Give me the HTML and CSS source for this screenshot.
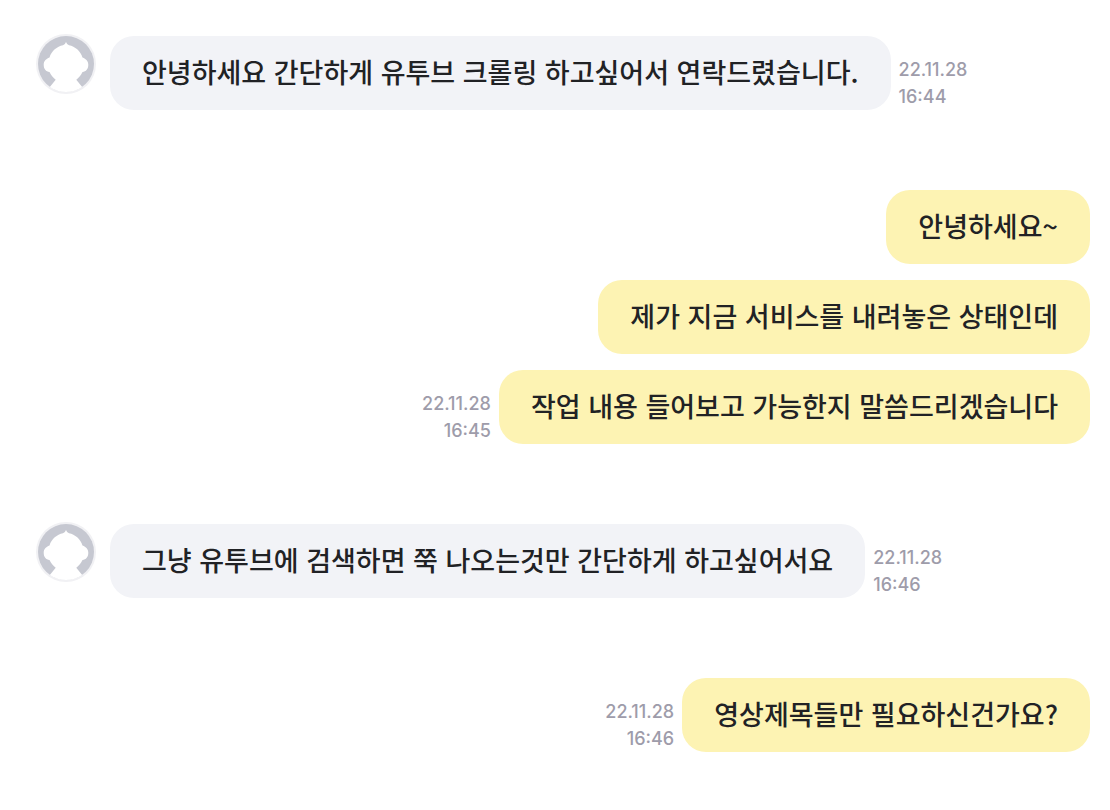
FILE: index.html
```html
<!DOCTYPE html>
<html lang="ko">
<head>
<meta charset="utf-8">
<title>채팅</title>
<link rel="stylesheet" href="styles.css">
</head>
<body>
<svg class="defs" aria-hidden="true">
  <symbol id="avatar" viewBox="0 0 60 60">
    <circle cx="30" cy="30" r="30" fill="#f1f1f4"/>
    <circle cx="30" cy="30" r="28" fill="#c6c8d1"/>
    <path d="M30 8Q30.800 10.500 33 11.300C39 12.500 44.500 17 46.500 23.500C50 25 52.300 27 52.300 30.700C52.300 35 50 37.500 46.500 38C45 41.500 43 43.500 40.300 45.700L46.200 53Q39 58 30 58Q21 58 13.800 53L19.700 45.700C17 43.500 15 41.500 13.500 38C10 37.500 7.700 35 7.700 30.700C7.700 27 10 25 13.500 23.500C15.500 17 21 12.500 27 11.300Q29.200 10.500 30 8Z" fill="#fff"/>
  </symbol>
</svg>
<main class="chat">
  <section class="group received">
    <svg class="avatar" role="img" aria-label="프로필"><use href="#avatar"/></svg>
    <div class="row"><p class="bubble">안녕하세요 간단하게 유투브 크롤링 하고싶어서 연락드렸습니다.</p><time class="time">22.11.28<br>16:44</time></div>
  </section>
  <section class="group sent">
    <div class="row"><p class="bubble">안녕하세요~</p></div>
    <div class="row"><p class="bubble">제가 지금 서비스를 내려놓은 상태인데</p></div>
    <div class="row"><time class="time">22.11.28<br>16:45</time><p class="bubble">작업 내용 들어보고 가능한지 말씀드리겠습니다</p></div>
  </section>
  <section class="group received">
    <svg class="avatar" role="img" aria-label="프로필"><use href="#avatar"/></svg>
    <div class="row"><p class="bubble">그냥 유투브에 검색하면 쭉 나오는것만 간단하게 하고싶어서요</p><time class="time">22.11.28<br>16:46</time></div>
  </section>
  <section class="group sent">
    <div class="row"><time class="time">22.11.28<br>16:46</time><p class="bubble">영상제목들만 필요하신건가요?</p></div>
  </section>
</main>
</body>
</html>
```
FILE: styles.css
```css
body {
  margin: 0;
  background: #fff;
  color: #212225;
  font-family: "Noto Sans CJK KR", sans-serif;
}
.defs {
  display: none;
}
.chat {
  display: flex;
  flex-direction: column;
  gap: 80px;
  padding: 36px 20px 36px 36px;
}
.group {
  display: flex;
}
.received {
  gap: 14px;
}
.sent {
  flex-direction: column;
  gap: 16px;
}
.sent .row {
  justify-content: flex-end;
}
.avatar {
  flex: none;
  width: 60px;
  height: 60px;
  margin-top: -2px;
}
.row {
  display: flex;
  align-items: flex-end;
  gap: 8px;
}
.bubble {
  margin: 0;
  padding: 15px 32px 17px;
  border-radius: 24px;
  background: #f2f3f7;
  font-size: 27px;
  font-weight: 500;
  line-height: 42px;
}
.sent .bubble {
  background: #fdf3b3;
}
.time {
  color: #9e9caa;
  font-family: Inter, sans-serif;
  font-size: 18px;
  font-weight: 500;
  line-height: 27px;
}
.sent .time {
  text-align: right;
}
```
